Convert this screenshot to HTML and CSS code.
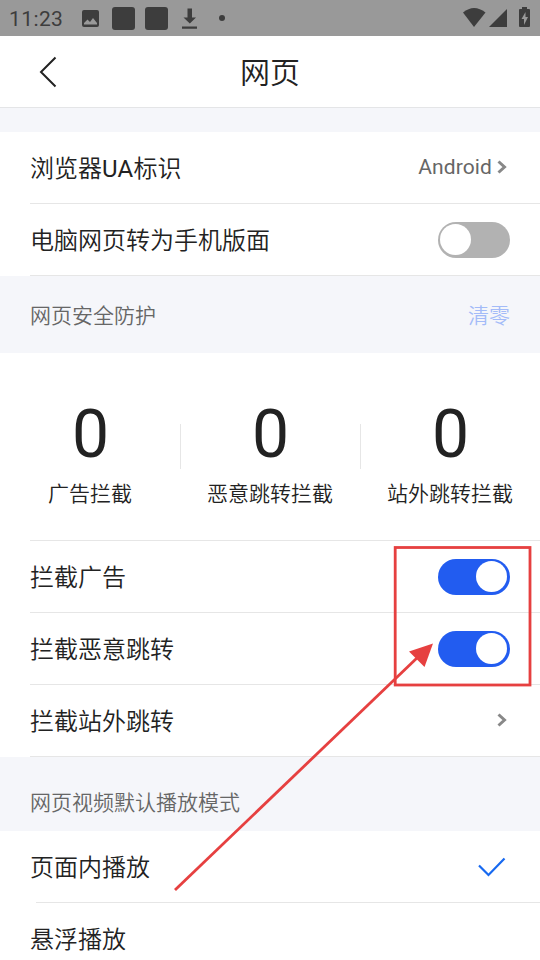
FILE: index.html
```html
<!DOCTYPE html>
<html lang="zh-CN">
<head>
<meta charset="utf-8">
<title>网页</title>
<link rel="stylesheet" href="styles.css">
</head>
<body>
<div class="screen">
  <div class="status">
    <span class="clock">11:23</span>
    <svg class="status-icons" width="150" height="36" viewBox="0 0 150 36">
      <path fill-rule="evenodd" d="M4 10h13q2 0 2 2v13q0 2-2 2H4q-2 0-2-2V12q0-2 2-2zM4 24.500h13v-1.500l-4-5-3 4-2.500-2.500L4 23z"/>
      <rect x="32" y="7" width="23" height="23" rx="3"/>
      <rect x="65" y="7" width="23" height="23" rx="3"/>
      <path d="M107.500 8.500h4.500v9h4l-6.200 6-6.300-6h4zM102 26.500h15v2.300h-15z"/>
      <circle cx="142" cy="18" r="3"/>
    </svg>
    <svg class="status-system" width="80" height="36" viewBox="0 0 80 36">
      <path d="M3 12.500Q14 3.500 25.500 12.500L14 27z"/>
      <path d="M29 27L47 9v18z"/>
      <path d="M62 7h5v2h2q1 0 1 1v16q0 1-1 1h-9q-1 0-1-1V10q0-1 1-1h2z"/>
      <path class="bolt" d="M65.500 12l-4 7h2.500v6l4-8h-2.500z"/>
    </svg>
  </div>
  <header class="header">
    <svg class="back" width="18" height="32" viewBox="0 0 18 32"><path d="M16.500 1.500L2 16l14.500 14.500"/></svg>
    <h1>网页</h1>
  </header>
  <div class="band"></div>
  <div class="row"><span>浏览器<span class="latin">UA</span>标识</span><span class="value">Android<svg class="chevron" width="10" height="14" viewBox="0 0 10 14"><path d="M1.500 1.500L7.500 7l-6 5.500"/></svg></span></div>
  <div class="row"><span>电脑网页转为手机版面</span><span class="toggle"></span></div>
  <div class="section protect"><span>网页安全防护</span><span class="clear">清零</span></div>
  <div class="stats">
    <div class="stat"><b>0</b><span>广告拦截</span></div>
    <div class="stat"><b>0</b><span>恶意跳转拦截</span></div>
    <div class="stat"><b>0</b><span>站外跳转拦截</span></div>
  </div>
  <div class="row"><span>拦截广告</span><span class="toggle on"></span></div>
  <div class="row"><span>拦截恶意跳转</span><span class="toggle on"></span></div>
  <div class="row"><span>拦截站外跳转</span><svg class="chevron" width="10" height="14" viewBox="0 0 10 14"><path d="M1.500 1.500L7.500 7l-6 5.500"/></svg></div>
  <div class="section video"><span>网页视频默认播放模式</span></div>
  <div class="row inset"><span>页面内播放</span><svg class="check" width="28" height="20" viewBox="0 0 28 20"><path d="M1 8.500L10.500 18 26.500 1.500"/></svg></div>
  <div class="row"><span>悬浮播放</span></div>
  <svg class="annotation" width="540" height="960" viewBox="0 0 540 960">
    <rect x="395.200" y="547.500" width="134.800" height="137.500"/>
    <path class="shaft" d="M175 890L418 657"/>
    <path class="head" d="M433 643.500L409 651.500 424.500 667z"/>
  </svg>
</div>
</body>
</html>
```
FILE: styles.css
```css
* { box-sizing: border-box; }
body {
  margin: 0;
  background: #fff;
  color: #222;
  font-family: Roboto, "Noto Sans CJK SC", sans-serif;
  font-weight: 350;
}
.screen {
  position: relative;
  width: 540px;
  height: 960px;
  overflow: hidden;
}
svg { display: block; flex: none; }
.status {
  display: flex;
  align-items: center;
  height: 36px;
  padding-left: 9px;
  background: #999;
  color: #3d3d3d;
  fill: #3d3d3d;
}
.clock { width: 71px; font-size: 21px; font-weight: 400; letter-spacing: 0.4px; line-height: 36px; padding-top: 1px; }
.status-system { margin-left: auto; }
.bolt { fill: #999; }
.header {
  display: grid;
  grid-template-columns: 60px 1fr 60px;
  align-items: center;
  height: 72px;
  border-bottom: 1px solid #e4e5e7;
}
.back { margin-left: 39px; fill: none; stroke: #222; stroke-width: 2; }
h1 { margin: 0; padding-top: 2px; font-size: 30px; font-weight: 350; line-height: 70px; text-align: center; }
.band { height: 24px; background: #f5f6fa; }
.row {
  display: flex;
  align-items: center;
  justify-content: space-between;
  height: 72px;
  margin-left: 30px;
  padding-right: 30px;
  border-bottom: 1px solid #e6e6e6;
  font-size: 24px;
  line-height: 36px;
}
.row > span:first-child { padding-top: 2px; }
.latin { font-weight: 400; letter-spacing: 0.3px; }
.value { display: flex; align-items: center; gap: 5px; margin-top: -2px; font-size: 21px; font-weight: 400; letter-spacing: 0.1px; color: #666; }
.chevron { margin-right: 3px; fill: none; stroke: #888; stroke-width: 3; }
.row > .chevron { margin-top: -1px; }
.toggle {
  display: flex;
  width: 72px;
  height: 36px;
  padding: 2px 3px 3px 2px;
  border-radius: 18px;
  background: #b2b2b2;
}
.toggle::before { content: ""; width: 31px; height: 31px; border-radius: 50%; background: #fff; }
.toggle.on { justify-content: flex-end; background: #225cf0; }
.section {
  display: flex;
  align-items: center;
  justify-content: space-between;
  padding: 0 30px;
  background: #f5f6fa;
  color: #666;
  font-size: 21px;
}
.protect { height: 77px; padding-bottom: 2px; }
.video { height: 74px; padding-top: 14px; }
.clear { color: #a3bbf8; }
.stats {
  display: grid;
  grid-template-columns: repeat(3, 180px);
  height: 188px;
  padding-top: 48px;
  background: linear-gradient(#e6e6e6, #e6e6e6) 30px 100% / 510px 1px no-repeat;
}
.stat {
  display: flex;
  flex-direction: column;
  align-items: center;
  font-size: 21px;
  line-height: 30px;
}
.stat b { height: 78px; padding: 0 0 0 1px; font-size: 66px; font-weight: 400; line-height: 68px; }
.stat + .stat { background: linear-gradient(#e6e6e6, #e6e6e6) 0 23px / 1px 45px no-repeat; }
.inset { margin-left: 36px; }
.inset span { margin-left: -6px; }
.check { margin-right: 4px; fill: none; stroke: #1769f0; stroke-width: 2.200; }
.annotation { position: absolute; top: 0; left: 0; fill: none; stroke: #e64040; stroke-width: 2.800; pointer-events: none; }
.annotation .head { fill: #e64040; stroke: none; }
```
